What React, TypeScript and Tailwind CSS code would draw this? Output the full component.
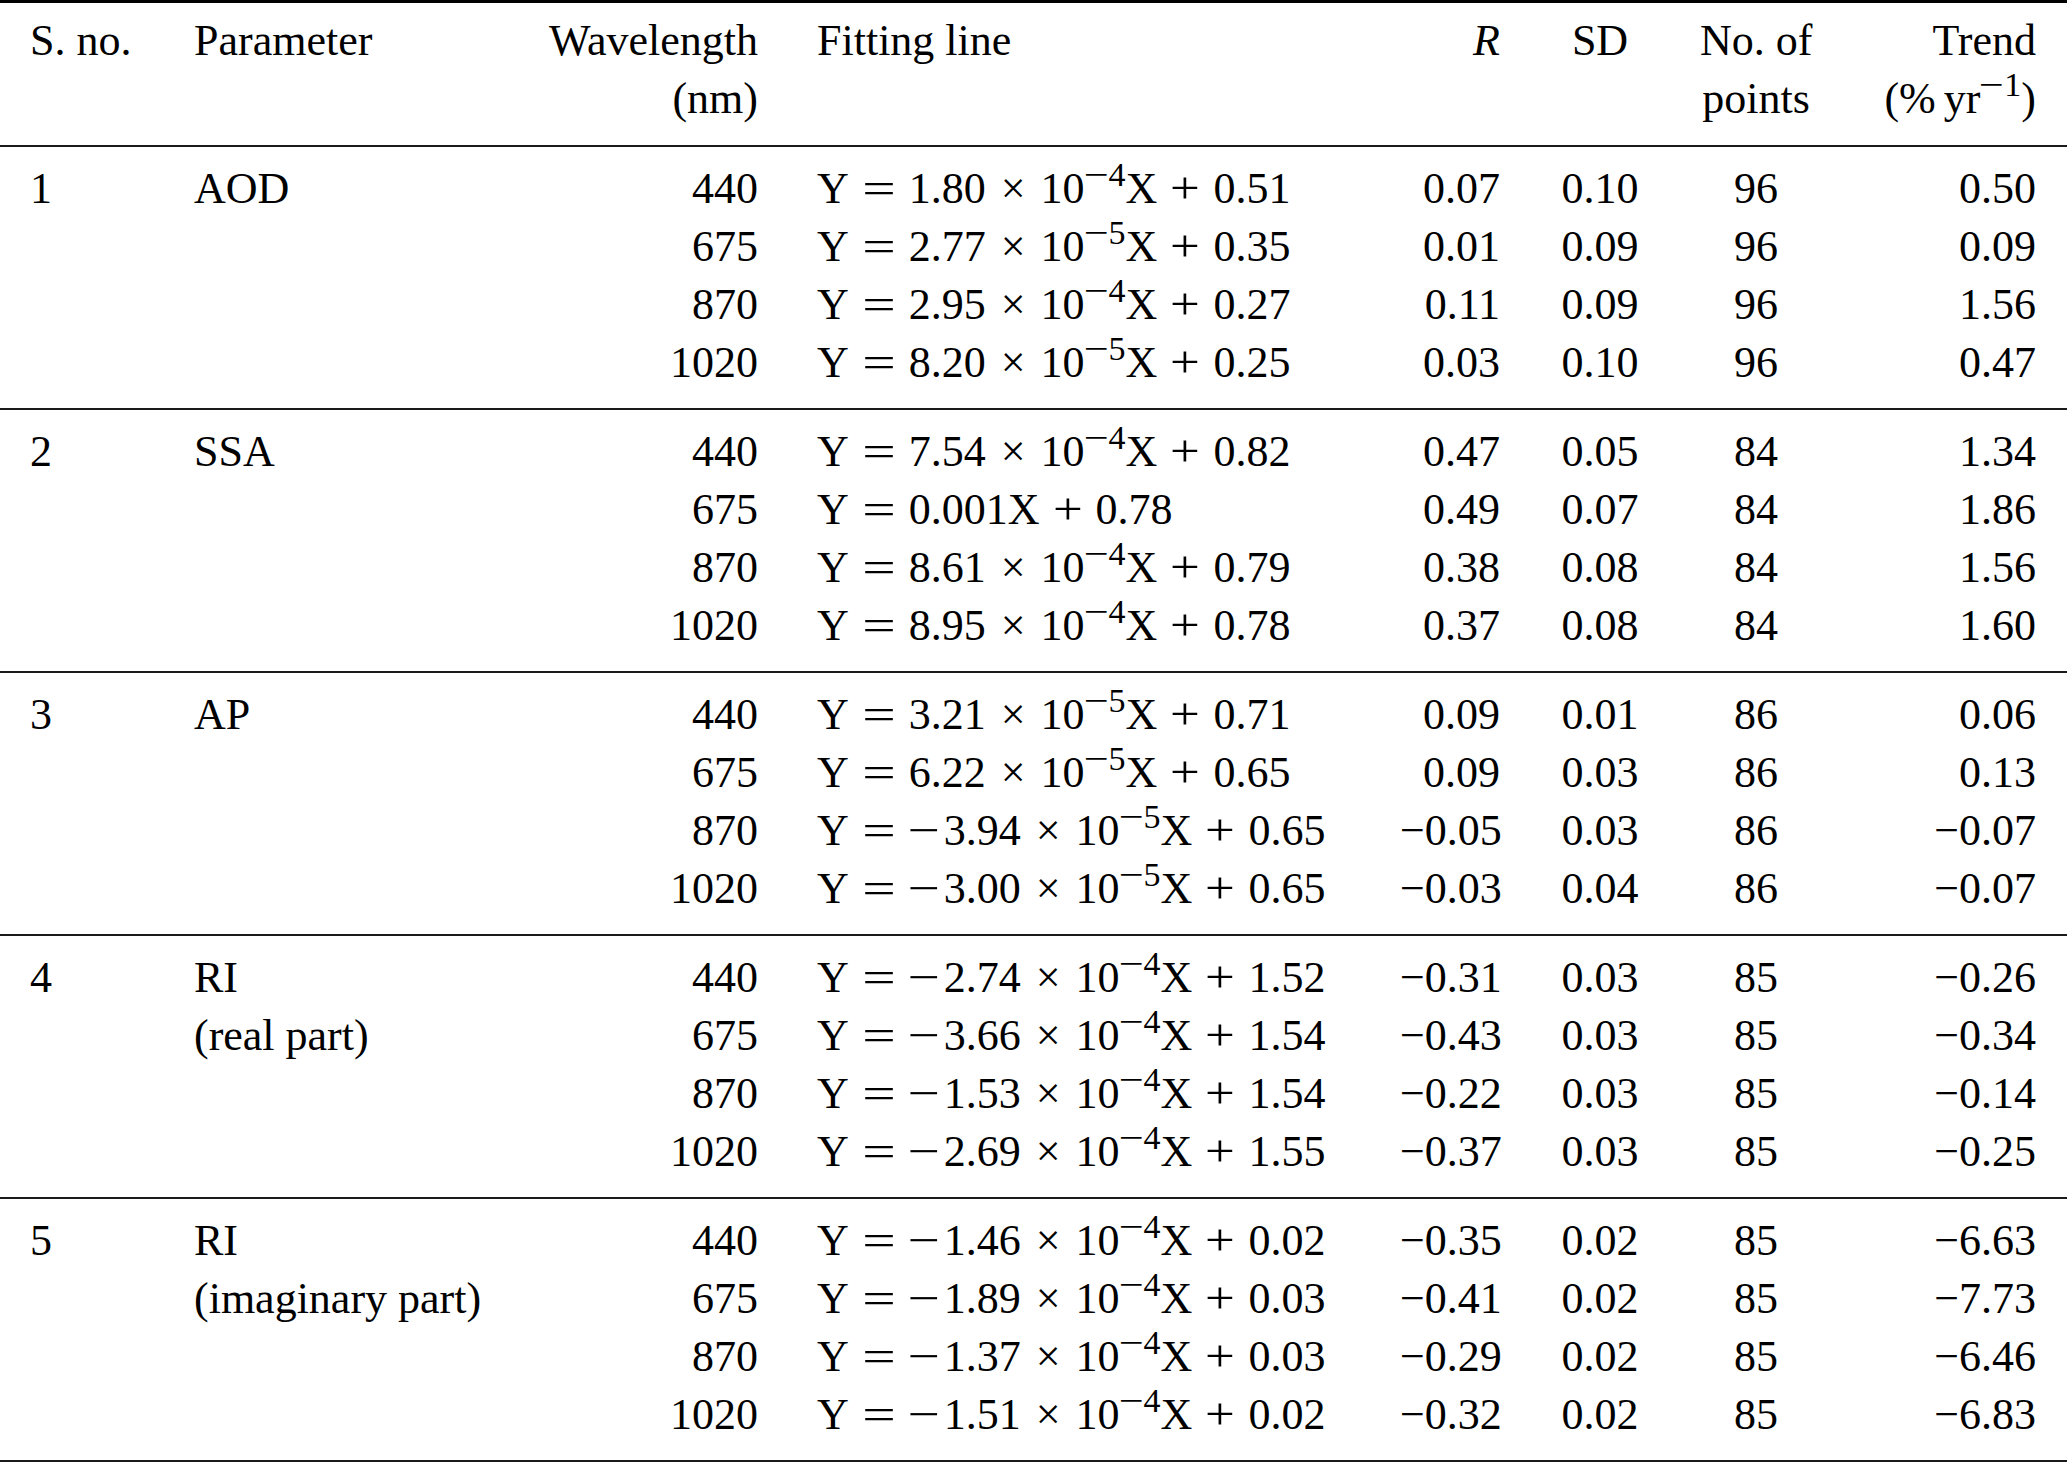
import React from 'react';

type Row = {
  wl: string;
  eq: { neg?: boolean; a: string; exp?: string; b: string };
  r: string;
  sd: string;
  n: string;
  trend: string;
};

type Group = { no: string; param: string[]; rows: Row[] };

const M = '\u2212';

const groups: Group[] = [
  {
    no: '1',
    param: ['AOD'],
    rows: [
      { wl: '440', eq: { a: '1.80', exp: '4', b: '0.51' }, r: '0.07', sd: '0.10', n: '96', trend: '0.50' },
      { wl: '675', eq: { a: '2.77', exp: '5', b: '0.35' }, r: '0.01', sd: '0.09', n: '96', trend: '0.09' },
      { wl: '870', eq: { a: '2.95', exp: '4', b: '0.27' }, r: '0.11', sd: '0.09', n: '96', trend: '1.56' },
      { wl: '1020', eq: { a: '8.20', exp: '5', b: '0.25' }, r: '0.03', sd: '0.10', n: '96', trend: '0.47' },
    ],
  },
  {
    no: '2',
    param: ['SSA'],
    rows: [
      { wl: '440', eq: { a: '7.54', exp: '4', b: '0.82' }, r: '0.47', sd: '0.05', n: '84', trend: '1.34' },
      { wl: '675', eq: { a: '0.001', b: '0.78' }, r: '0.49', sd: '0.07', n: '84', trend: '1.86' },
      { wl: '870', eq: { a: '8.61', exp: '4', b: '0.79' }, r: '0.38', sd: '0.08', n: '84', trend: '1.56' },
      { wl: '1020', eq: { a: '8.95', exp: '4', b: '0.78' }, r: '0.37', sd: '0.08', n: '84', trend: '1.60' },
    ],
  },
  {
    no: '3',
    param: ['AP'],
    rows: [
      { wl: '440', eq: { a: '3.21', exp: '5', b: '0.71' }, r: '0.09', sd: '0.01', n: '86', trend: '0.06' },
      { wl: '675', eq: { a: '6.22', exp: '5', b: '0.65' }, r: '0.09', sd: '0.03', n: '86', trend: '0.13' },
      { wl: '870', eq: { neg: true, a: '3.94', exp: '5', b: '0.65' }, r: M + '0.05', sd: '0.03', n: '86', trend: M + '0.07' },
      { wl: '1020', eq: { neg: true, a: '3.00', exp: '5', b: '0.65' }, r: M + '0.03', sd: '0.04', n: '86', trend: M + '0.07' },
    ],
  },
  {
    no: '4',
    param: ['RI', '(real part)'],
    rows: [
      { wl: '440', eq: { neg: true, a: '2.74', exp: '4', b: '1.52' }, r: M + '0.31', sd: '0.03', n: '85', trend: M + '0.26' },
      { wl: '675', eq: { neg: true, a: '3.66', exp: '4', b: '1.54' }, r: M + '0.43', sd: '0.03', n: '85', trend: M + '0.34' },
      { wl: '870', eq: { neg: true, a: '1.53', exp: '4', b: '1.54' }, r: M + '0.22', sd: '0.03', n: '85', trend: M + '0.14' },
      { wl: '1020', eq: { neg: true, a: '2.69', exp: '4', b: '1.55' }, r: M + '0.37', sd: '0.03', n: '85', trend: M + '0.25' },
    ],
  },
  {
    no: '5',
    param: ['RI', '(imaginary part)'],
    rows: [
      { wl: '440', eq: { neg: true, a: '1.46', exp: '4', b: '0.02' }, r: M + '0.35', sd: '0.02', n: '85', trend: M + '6.63' },
      { wl: '675', eq: { neg: true, a: '1.89', exp: '4', b: '0.03' }, r: M + '0.41', sd: '0.02', n: '85', trend: M + '7.73' },
      { wl: '870', eq: { neg: true, a: '1.37', exp: '4', b: '0.03' }, r: M + '0.29', sd: '0.02', n: '85', trend: M + '6.46' },
      { wl: '1020', eq: { neg: true, a: '1.51', exp: '4', b: '0.02' }, r: M + '0.32', sd: '0.02', n: '85', trend: M + '6.83' },
    ],
  },
];

const cols =
  'grid grid-cols-[164px_306px_258px_642px_100px_200px_112px_224px] pl-[30px] pr-[31px] whitespace-nowrap';

function Sup({ children }: { children: React.ReactNode }) {
  return <span className="relative -top-[17px] text-[34px] leading-none">{children}</span>;
}

function Equation({ eq }: { eq: Row['eq'] }) {
  return (
    <span>
      Y<span className="mx-[13px] inline-block w-[34px] scale-x-[1.35] text-center">=</span>
      {eq.neg && <span className="mr-[5px] inline-block w-[30px] scale-x-[1.3] text-center">{M}</span>}
      {eq.a}
      {eq.exp ? (
        <>
          <span className="mx-[15px]">{'\u00d7'}</span>
          10
          <Sup>
            <span className="mr-[2px] inline-block w-[22px] scale-x-[1.3] text-center">{M}</span>
            {eq.exp}
          </Sup>
          X
        </>
      ) : (
        'X'
      )}
      <span className="mx-[13px] inline-block w-[30px] scale-x-[1.2] text-center">+</span>
      {eq.b}
    </span>
  );
}

export default function App() {
  return (
    <div
      className="w-[2067px] bg-white text-[44px] leading-[58px] text-black"
      style={{ fontFamily: '"Liberation Serif", "Times New Roman", serif' }}
    >
      <div className="border-t-[3px] border-black" />
      <div className={`${cols} pt-[9px] pb-[17px]`}>
        <div>S. no.</div>
        <div>Parameter</div>
        <div className="text-right">
          <div>Wavelength</div>
          <div>(nm)</div>
        </div>
        <div className="pl-[59px]">Fitting line</div>
        <div className="text-right italic">R</div>
        <div className="text-center">SD</div>
        <div className="text-center">
          <div>No. of</div>
          <div>points</div>
        </div>
        <div className="text-right">
          <div>Trend</div>
          <div>
            (%<span className="ml-[8px]">yr</span>
            <Sup>
              <span className="mr-[2px] inline-block w-[22px] scale-x-[1.3] text-center">{M}</span>1
            </Sup>
            )
          </div>
        </div>
      </div>
      {groups.map((g) => (
        <div key={g.no} className="border-t-2 border-[#1a1a1a] pt-[13px] pb-[16px]">
          {g.rows.map((row, i) => (
            <div key={row.wl} className={cols}>
              <div>{i === 0 ? g.no : ''}</div>
              <div>{g.param[i] ?? ''}</div>
              <div className="text-right">{row.wl}</div>
              <div className="pl-[59px]">
                <Equation eq={row.eq} />
              </div>
              <div className="text-right">{row.r}</div>
              <div className="text-center">{row.sd}</div>
              <div className="text-center">{row.n}</div>
              <div className="text-right">{row.trend}</div>
            </div>
          ))}
        </div>
      ))}
      <div className="border-t-2 border-[#1a1a1a]" />
    </div>
  );
}
